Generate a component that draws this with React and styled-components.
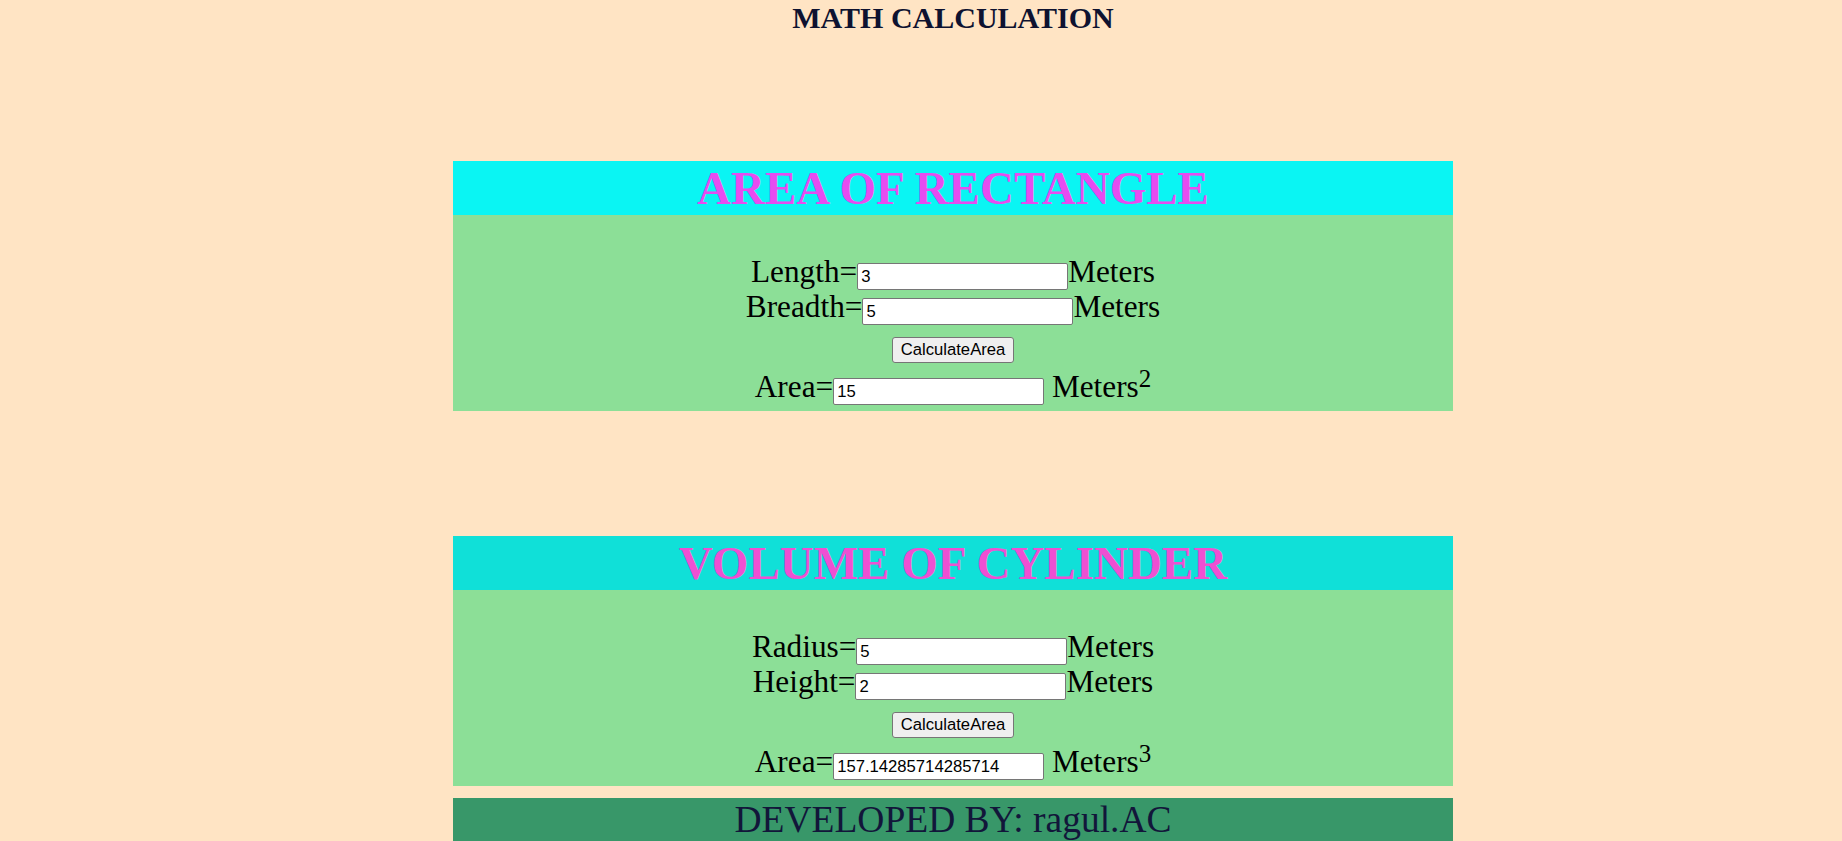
import React from "react";
import styled, { createGlobalStyle } from "styled-components";

const GlobalStyle = createGlobalStyle`
    html, body {
        margin: 0;
        padding: 0;
        background: #FFE4C4;
        font-family: "Liberation Serif", "Times New Roman", serif;
    }
`;

const Page = styled.div`
    display: flex;
    flex-direction: column;
    align-items: center;
    padding-left: 64px;
`;

const Title = styled.h2`
    margin: 1px 0 0;
    font-size: 30px;
    line-height: 34.5px;
    font-weight: bold;
    color: #0E1230;
`;

const Panel = styled.section`
    width: 1000px;
    margin-top: ${(p) => p.$gap}px;
`;

const PanelHead = styled.h1`
    margin: 0;
    height: 54px;
    line-height: 54px;
    font-size: 47px;
    font-weight: bold;
    text-align: center;
    background: ${(p) => p.$bg};
    color: ${(p) => p.$color};
`;

const PanelBody = styled.div`
    background: #8CDF97;
    padding: 39px 0 7px;
    text-align: center;
    font-size: 31.25px;
    color: #000;
`;

const Line = styled.div`
    height: 35px;
    line-height: 35px;
    white-space: nowrap;
`;

const ButtonLine = styled.div`
    height: 45px;
    padding-top: 13px;
    box-sizing: border-box;
`;

const Field = styled.input`
    box-sizing: border-box;
    width: 211px;
    height: 27px;
    padding: 0 3px;
    border: 1px solid #767676;
    border-radius: 2px;
    background: #fff;
    font-family: "Liberation Sans", Arial, sans-serif;
    font-size: 16.67px;
    color: #000;
    vertical-align: baseline;
`;

const Button = styled.button`
    box-sizing: border-box;
    height: 26px;
    padding: 0 7.5px;
    border: 1px solid #767676;
    border-radius: 3px;
    background: #EFEFEF;
    font-family: "Liberation Sans", Arial, sans-serif;
    font-size: 16.67px;
    color: #000;
    display: block;
    margin: 0 auto;
`;

const Sup = styled.sup`
    font-size: 25px;
    line-height: 0;
    vertical-align: 10px;
`;

const Footer = styled.footer`
    width: 1000px;
    margin-top: 12px;
    background: #389769;
    color: #12163A;
    font-size: 37.5px;
    text-align: center;
    line-height: 43px;
`;

const Calculator = ({ title, headBg, headColor, gap, first, second, result, power }) => (
    <Panel $gap={gap}>
        <PanelHead $bg={headBg} $color={headColor}>{title}</PanelHead>
        <PanelBody>
            <Line>{first.label}=<Field defaultValue={first.value} />Meters</Line>
            <Line>{second.label}=<Field defaultValue={second.value} />Meters</Line>
            <ButtonLine>
                <Button type="button">CalculateArea</Button>
            </ButtonLine>
            <Line>Area=<Field defaultValue={result} /> Meters<Sup>{power}</Sup></Line>
        </PanelBody>
    </Panel>
);

const App = () => {
    return (
        <>
            <GlobalStyle />
            <Page>
                <Title>MATH CALCULATION</Title>
                <Calculator
                    title="AREA OF RECTANGLE"
                    headBg="#0AF5F3"
                    headColor="#E64CF0"
                    gap={125}
                    first={{ label: "Length", value: "3" }}
                    second={{ label: "Breadth", value: "5" }}
                    result="15"
                    power="2"
                />
                <Calculator
                    title="VOLUME OF CYLINDER"
                    headBg="#10E0D8"
                    headColor="#EE50D2"
                    gap={125}
                    first={{ label: "Radius", value: "5" }}
                    second={{ label: "Height", value: "2" }}
                    result="157.14285714285714"
                    power="3"
                />
                <Footer>DEVELOPED BY: ragul.AC</Footer>
            </Page>
        </>
    );
};

export default App;
